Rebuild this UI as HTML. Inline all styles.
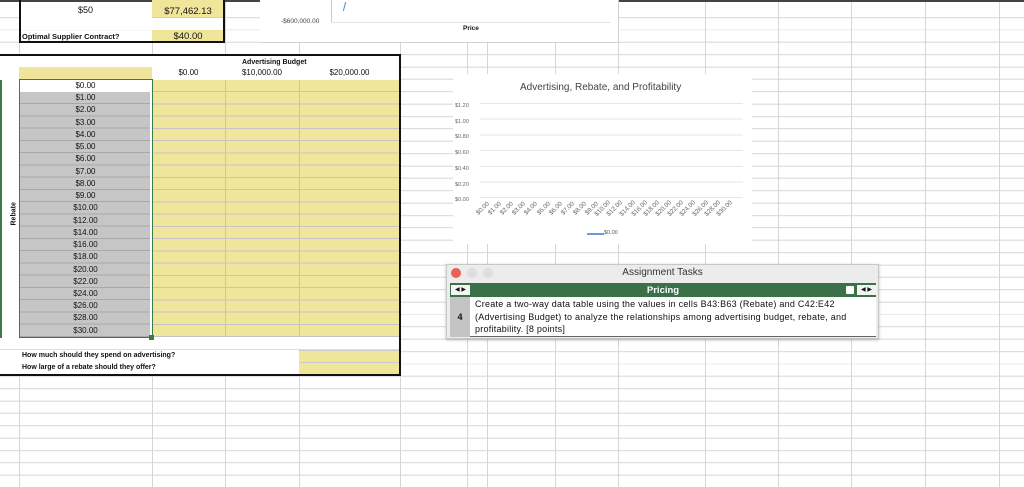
<!DOCTYPE html>
<html><head><meta charset="utf-8"><style>
*{margin:0;padding:0;box-sizing:border-box}
body{width:1024px;height:487px;overflow:hidden;background:#fff;position:relative;font-family:"Liberation Sans",sans-serif;font-size:8px;color:#111}
.grid{position:absolute;left:0;top:0;width:1024px;height:487px;background:repeating-linear-gradient(to bottom,transparent 0,transparent 11.4px,#d6d6d6 11.4px,#d6d6d6 12.37px);background-position:0 5.7px}
.v{position:absolute;top:0;height:487px;width:1px;background:#d6d6d6}
.a{position:absolute}
.y{background:#efe59b}
.c{text-align:center}
.g{background:#c6c6c6}
</style></head><body>
<div class="grid"></div>
<div class="v" style="left:19px"></div><div class="v" style="left:152px"></div><div class="v" style="left:225px"></div><div class="v" style="left:299px"></div><div class="v" style="left:400px"></div><div class="v" style="left:467px"></div><div class="v" style="left:487px"></div><div class="v" style="left:555px"></div><div class="v" style="left:618px"></div><div class="v" style="left:705px"></div><div class="v" style="left:778px"></div><div class="v" style="left:851px"></div><div class="v" style="left:925px"></div><div class="v" style="left:999px"></div>

<div class="a" style="left:0;top:0;width:1024px;height:2px;background:#444"></div>
<div class="a" style="left:19px;top:5px;width:133px;height:13px;background:#fff;line-height:13px" ></div>
<div class="a c" style="left:19px;top:5px;width:133px;font-size:9px">$50</div>
<div class="a y c" style="left:152px;top:0;width:72px;height:18px;font-size:9.5px;line-height:24px;border-bottom:1px solid #ccc">$77,462.13</div>
<div class="a" style="left:19px;top:18px;width:205px;height:12px;background:#fff"></div>
<div class="a" style="left:22px;top:31px;font-size:7.5px;font-weight:bold;line-height:12px">Optimal Supplier Contract?</div>
<div class="a y c" style="left:152px;top:30px;width:72px;height:13px;font-size:9.5px;line-height:13px">$40.00</div>
<div class="a" style="left:19px;top:0;width:206px;height:43px;border:2px solid #111;border-top:none"></div>

<div class="a" style="left:260px;top:0;width:359px;height:43px;background:#fff;border-right:1px solid #d0d0d0;border-bottom:1px solid #d0d0d0"></div>
<div class="a" style="left:281px;top:18px;font-size:6.5px;color:#444">-$600,000.00</div>
<div class="a" style="left:331px;top:0;width:1px;height:22px;background:#ccc"></div>
<div class="a" style="left:331px;top:22px;width:280px;height:1px;background:#e4e4e4"></div>
<div class="a" style="left:344px;top:2px;width:1px;height:9px;background:#4a86d0;transform:rotate(15deg)"></div>
<div class="a" style="left:463px;top:25px;font-size:6.5px;font-weight:bold">Price</div>

<div class="a" style="left:0;top:55px;width:400px;height:320px;background:#fff"></div>
<div class="a" style="left:225px;top:58px;width:100px;font-size:7px;font-weight:bold;line-height:10px;padding-left:17px">Advertising Budget</div>
<div class="a y" style="left:19px;top:67px;width:133px;height:12px"></div>
<div class="a c" style="left:152px;top:68px;width:73px;font-size:8px">$0.00</div>
<div class="a c" style="left:225px;top:68px;width:74px;font-size:8px">$10,000.00</div>
<div class="a c" style="left:299px;top:68px;width:101px;font-size:8px">$20,000.00</div>
<div class="a" style="left:0;top:80px;width:2px;height:258px;background:#3d7a4a"></div>
<div class="a" style="left:2px;top:210px;font-size:7px;font-weight:bold;transform:rotate(-90deg);transform-origin:center;width:24px">Rebate</div>
<div class="a y" style="left:152px;top:80px;width:248px;height:257px;background:repeating-linear-gradient(to bottom,#efe59b 0,#efe59b 11.24px,#c4c4c4 11.24px,#c4c4c4 12.24px)"></div>
<div class="a" style="left:225px;top:80px;width:1px;height:257px;background:#c4c4c4"></div>
<div class="a" style="left:299px;top:80px;width:1px;height:257px;background:#c4c4c4"></div>
<div class="a g" style="left:20px;top:92px;width:130px;height:245px;background:repeating-linear-gradient(to bottom,#c6c6c6 0,#c6c6c6 11.24px,#a8a8a8 11.24px,#a8a8a8 12.24px)"></div>
<div class="a c" style="left:19px;top:80px;width:133px;font-size:8px;line-height:12.24px">$0.00<br>$1.00<br>$2.00<br>$3.00<br>$4.00<br>$5.00<br>$6.00<br>$7.00<br>$8.00<br>$9.00<br>$10.00<br>$12.00<br>$14.00<br>$16.00<br>$18.00<br>$20.00<br>$22.00<br>$24.00<br>$26.00<br>$28.00<br>$30.00</div>
<div class="a" style="left:19px;top:79px;width:134px;height:259px;border:1.5px solid #3d7a4a"></div>
<div class="a" style="left:149px;top:335px;width:5px;height:5px;background:#3d7a4a"></div>
<div class="a" style="left:0;top:349px;width:400px;height:1px;background:#ddd"></div>
<div class="a" style="left:22px;top:350px;font-size:7px;font-weight:bold;line-height:12px">How much should they spend on advertising?<br>How large of a rebate should they offer?</div>
<div class="a y" style="left:299px;top:350px;width:101px;height:24px;border-top:1px solid #ccc"></div>
<div class="a" style="left:299px;top:362px;width:101px;height:1px;background:#ccc"></div>
<div class="a" style="left:0;top:54px;width:401px;height:322px;border:2px solid #111;border-left:none"></div>

<div class="a" style="left:453px;top:74px;width:299px;height:170px;background:#fff"></div>
<div class="a" style="left:520px;top:82px;font-size:10px;color:#444">Advertising, Rebate, and Profitability</div>
<div class="a" style="left:455px;top:99px;font-size:5.5px;color:#666;line-height:15.7px">$1.20<br>$1.00<br>$0.80<br>$0.60<br>$0.40<br>$0.20<br>$0.00</div>
<div class="a" style="left:480px;top:103px;width:263px;height:95px;background:repeating-linear-gradient(to bottom,#e6e6e6 0,#e6e6e6 1px,transparent 1px,transparent 15.7px)"></div>
<div class="a" style="left:470px;top:199px;width:280px;height:20px;font-size:6.3px;color:#666">
<span class="a" style="left:5px;top:6px;transform:rotate(-45deg)">$0.00</span><span class="a" style="left:17px;top:6px;transform:rotate(-45deg)">$1.00</span><span class="a" style="left:29px;top:6px;transform:rotate(-45deg)">$2.00</span><span class="a" style="left:41px;top:6px;transform:rotate(-45deg)">$3.00</span><span class="a" style="left:53px;top:6px;transform:rotate(-45deg)">$4.00</span><span class="a" style="left:66px;top:6px;transform:rotate(-45deg)">$5.00</span><span class="a" style="left:78px;top:6px;transform:rotate(-45deg)">$6.00</span><span class="a" style="left:90px;top:6px;transform:rotate(-45deg)">$7.00</span><span class="a" style="left:102px;top:6px;transform:rotate(-45deg)">$8.00</span><span class="a" style="left:114px;top:6px;transform:rotate(-45deg)">$9.00</span><span class="a" style="left:123px;top:6px;transform:rotate(-45deg)">$10.00</span><span class="a" style="left:135px;top:6px;transform:rotate(-45deg)">$12.00</span><span class="a" style="left:148px;top:6px;transform:rotate(-45deg)">$14.00</span><span class="a" style="left:160px;top:6px;transform:rotate(-45deg)">$16.00</span><span class="a" style="left:172px;top:6px;transform:rotate(-45deg)">$18.00</span><span class="a" style="left:184px;top:6px;transform:rotate(-45deg)">$20.00</span><span class="a" style="left:196px;top:6px;transform:rotate(-45deg)">$22.00</span><span class="a" style="left:208px;top:6px;transform:rotate(-45deg)">$24.00</span><span class="a" style="left:221px;top:6px;transform:rotate(-45deg)">$26.00</span><span class="a" style="left:233px;top:6px;transform:rotate(-45deg)">$28.00</span><span class="a" style="left:245px;top:6px;transform:rotate(-45deg)">$30.00</span></div>
<div class="a" style="left:587px;top:233px;width:17px;height:1.5px;background:#6b9bd6"></div>
<div class="a" style="left:604px;top:230px;font-size:5.5px;color:#555">$0.00</div>

<div class="a" style="left:446px;top:264px;width:433px;height:75px;background:#ececec;border:1px solid #c8c8c8;box-shadow:0 1px 3px rgba(0,0,0,.25)"></div>
<div class="a" style="left:451px;top:268px;width:10px;height:10px;border-radius:50%;background:#ec5f57"></div>
<div class="a" style="left:467px;top:268px;width:10px;height:10px;border-radius:50%;background:#dedede"></div>
<div class="a" style="left:483px;top:268px;width:10px;height:10px;border-radius:50%;background:#dedede"></div>
<div class="a c" style="left:446px;top:267px;width:433px;font-size:10px;color:#333">Assignment Tasks</div>
<div class="a" style="left:450px;top:283px;width:426px;height:14px;background:#3b7148"></div>
<div class="a c" style="left:450px;top:284px;width:426px;font-size:9.5px;font-weight:bold;color:#fff;line-height:13px">Pricing</div>
<div class="a" style="left:451px;top:285px;width:19px;height:10px;background:#f4f4f4;font-size:6px;line-height:10px;text-align:center">◀ ▶</div>
<div class="a" style="left:846px;top:286px;width:8px;height:8px;background:#fff;border-radius:1px"></div>
<div class="a" style="left:857px;top:285px;width:19px;height:10px;background:#f4f4f4;font-size:6px;line-height:10px;text-align:center">◀ ▶</div>
<div class="a" style="left:450px;top:297px;width:426px;height:40px;background:#fff;border-bottom:1px solid #666"></div>
<div class="a" style="left:450px;top:297px;width:20px;height:40px;background:#c4c4c4;font-size:9px;font-weight:bold;line-height:40px;text-align:center">4</div>
<div class="a" style="left:475px;top:298px;font-size:9px;letter-spacing:0.25px;line-height:12.6px;color:#111;white-space:nowrap">Create a two-way data table using the values in cells B43:B63 (Rebate) and C42:E42<br>(Advertising Budget) to analyze the relationships among advertising budget, rebate, and<br>profitability. [8 points]</div>
</body></html>
